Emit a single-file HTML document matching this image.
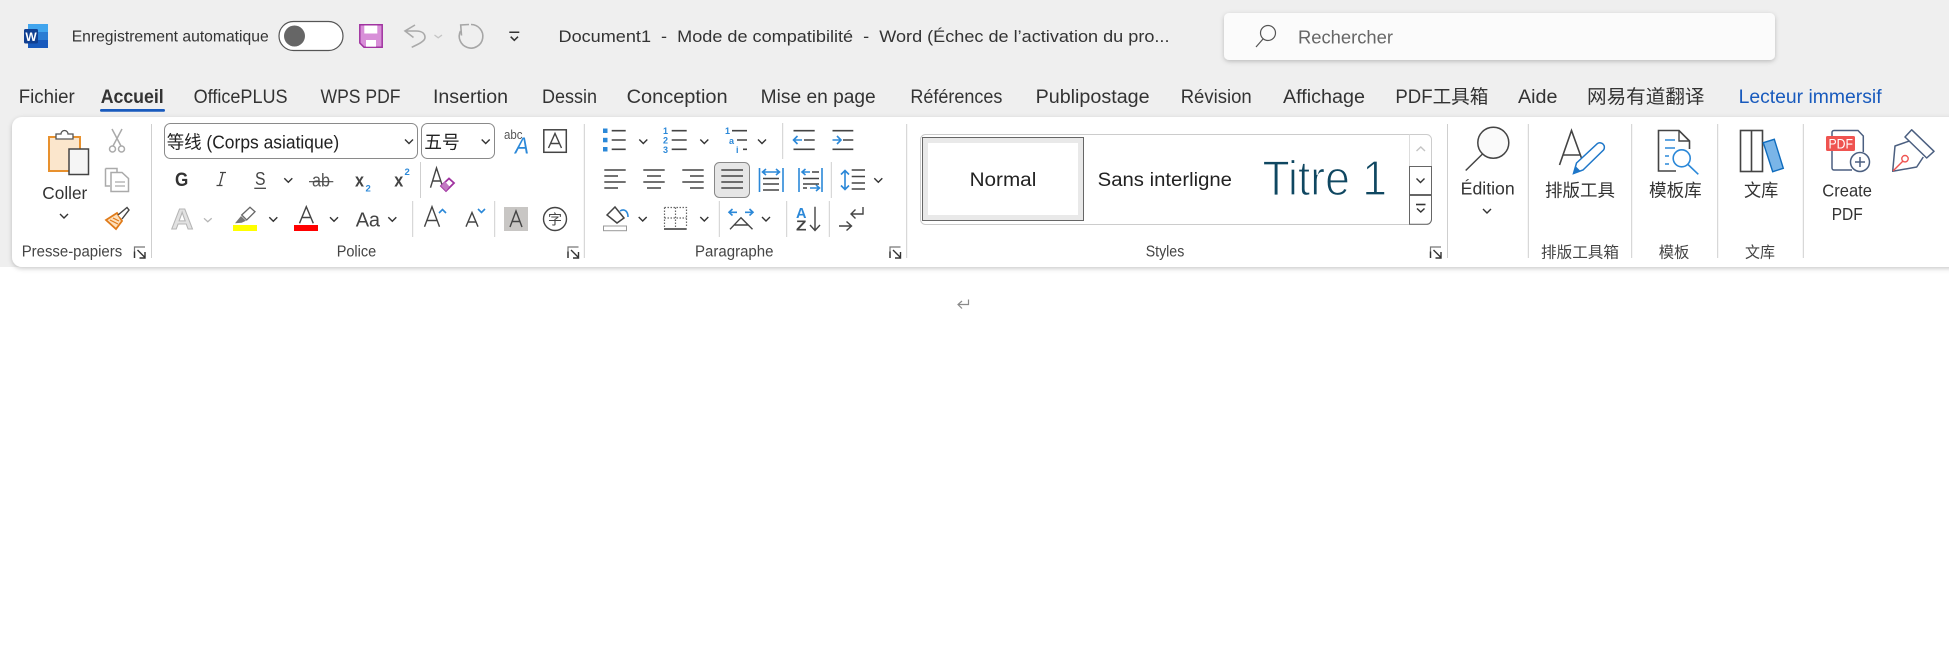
<!DOCTYPE html>
<html lang="fr"><head><meta charset="utf-8"><title>Document1 - Word</title>
<style>
html,body{margin:0;padding:0;background:#fff;width:1949px;height:649px;overflow:hidden}
svg{display:block}
text{font-family:"Liberation Sans","Noto Sans CJK SC",sans-serif;white-space:pre}
.tab{font-size:19px;fill:#333}
.lab{font-size:15.500px;fill:#444}
.big{font-size:17.500px;fill:#333}
.ln{stroke:#444;stroke-width:1.6;fill:none}
.bl{stroke:#2b88d8;stroke-width:1.6;fill:none}
.sep{stroke:#cfcfcf;stroke-width:1}
.ch{stroke:#333;stroke-width:1.4;fill:none}
.lA{fill:none;stroke:#444;stroke-width:1.4}
.num{font-size:9px;font-weight:bold;fill:#2b88d8}
</style></head><body>
<svg width="1949" height="649" viewBox="0 0 1949 649" xmlns="http://www.w3.org/2000/svg">
<defs>
<path id="c" d="M-4-2 0 2 4-2" class="ch"/>
<g id="l"><path d="M.5 11.5V.5H11" stroke="#777" stroke-width="1.2" fill="none"/><path d="M.5 11.5V5M3.5 3.5 11 11M11 5.5V11.5H5.5" stroke="#333" stroke-width="1.4" fill="none"/></g>
<filter id="sh" x="-2%" y="-10%" width="104%" height="125%"><feDropShadow dx="0" dy="1.5" stdDeviation="2.5" flood-color="#000" flood-opacity=".22"/></filter>
</defs>
<rect width="1949" height="267" fill="#efefef"/>
<rect x="0" y="267" width="1949" height="382" fill="#fff"/>

<!-- title bar -->
<rect x="28" y="24" width="20" height="24" rx="1.5" fill="#2b7cd3"/>
<rect x="28" y="24" width="20" height="8" fill="#41a5ee"/>
<rect x="28" y="40" width="20" height="8" fill="#185abd"/>
<rect x="24" y="29" width="14" height="14.500" rx="1.5" fill="#103f91"/>
<text x="31" y="41" text-anchor="middle" font-size="12" font-weight="bold" fill="#fff">W</text>
<text x="71.700" y="41.700" font-size="16" fill="#333" textLength="197" lengthAdjust="spacingAndGlyphs">Enregistrement automatique</text>
<rect x="279" y="21.500" width="64" height="29" rx="14.500" fill="#fff" stroke="#555" stroke-width="1.2"/>
<circle cx="294.500" cy="36" r="10.500" fill="#666"/>
<path d="M359.800 24.800H382.200V47.200H364L359.800 43Z" fill="#d88fd8" stroke="#a033a0" stroke-width="1.5"/>
<rect x="364.300" y="25.500" width="13" height="8" fill="#fff"/><rect x="366" y="40" width="10" height="6.700" fill="#fff"/>
<path d="M415 25 405 31 413.500 37.500M405 31H416C422 31 425 33.500 425 37.500 425 41 419 44 411.700 47.300" fill="none" stroke="#a9a9a9" stroke-width="1.6"/>
<path d="M434.500 35 438.200 37.800 442 35" fill="none" stroke="#c4c4c4" stroke-width="1.3"/>
<path d="M469 24.500 460.700 25 461.500 35.500M471 24.500A11.800 11.800 0 1 1 460.500 31" fill="none" stroke="#a6a6a6" stroke-width="1.6"/>
<path d="M509.300 32.300H519.300M510.700 36.700 514.300 40.300 518 36.700" fill="none" stroke="#333" stroke-width="1.5"/>
<text x="558.500" y="42" font-size="17" fill="#333" textLength="611" lengthAdjust="spacingAndGlyphs">Document1  -  Mode de compatibilité  -  Word (Échec de l’activation du pro...</text>
<rect x="1224" y="13" width="551" height="47" rx="5" fill="#fbfbfb" filter="url(#sh)"/>
<circle cx="1268" cy="33" r="7.500" fill="none" stroke="#555" stroke-width="1.2"/>
<path d="M1263 39 1256 47" stroke="#555" stroke-width="1.2"/>
<text x="1298" y="43.500" font-size="18" fill="#666" textLength="95" lengthAdjust="spacingAndGlyphs">Rechercher</text>

<!-- tabs -->
<text class="tab" x="18.700" y="103" textLength="56" lengthAdjust="spacingAndGlyphs">Fichier</text>
<text class="tab" x="100.700" y="103" font-weight="bold" textLength="63" lengthAdjust="spacingAndGlyphs">Accueil</text>
<rect x="100" y="109" width="65" height="2.800" rx="1.400" fill="#185abd"/>
<text class="tab" x="193.600" y="103" textLength="94" lengthAdjust="spacingAndGlyphs">OfficePLUS</text>
<text class="tab" x="320.500" y="103" textLength="80" lengthAdjust="spacingAndGlyphs">WPS PDF</text>
<text class="tab" x="433" y="103" textLength="75" lengthAdjust="spacingAndGlyphs">Insertion</text>
<text class="tab" x="542" y="103" textLength="55" lengthAdjust="spacingAndGlyphs">Dessin</text>
<text class="tab" x="626.600" y="103" textLength="101" lengthAdjust="spacingAndGlyphs">Conception</text>
<text class="tab" x="760.700" y="103" textLength="115" lengthAdjust="spacingAndGlyphs">Mise en page</text>
<text class="tab" x="910.400" y="103" textLength="92" lengthAdjust="spacingAndGlyphs">Références</text>
<text class="tab" x="1035.600" y="103" textLength="114" lengthAdjust="spacingAndGlyphs">Publipostage</text>
<text class="tab" x="1180.700" y="103" textLength="71" lengthAdjust="spacingAndGlyphs">Révision</text>
<text class="tab" x="1283" y="103" textLength="82" lengthAdjust="spacingAndGlyphs">Affichage</text>
<text class="tab" x="1395.400" y="103" textLength="93" lengthAdjust="spacingAndGlyphs">PDF工具箱</text>
<text class="tab" x="1518" y="103" textLength="39.500" lengthAdjust="spacingAndGlyphs">Aide</text>
<text class="tab" x="1587" y="103" textLength="117.500" lengthAdjust="spacingAndGlyphs">网易有道翻译</text>
<text class="tab" x="1738.600" y="103" style="fill:#185abd" textLength="143" lengthAdjust="spacingAndGlyphs">Lecteur immersif</text>

<!-- ribbon -->
<path d="M22 117H1960V267H22A10 10 0 0 1 12 257V127A10 10 0 0 1 22 117Z" fill="#fff" filter="url(#sh)"/>

<!-- clipboard -->
<rect x="49" y="137" width="31" height="34" fill="#fbe6cc" stroke="#e8912e" stroke-width="2"/>
<path d="M56 139V134H61A3.500 3.500 0 0 1 68 134H73V139Z" fill="#fff" stroke="#555" stroke-width="1.300"/>
<rect x="69" y="149" width="19.500" height="25.500" fill="#f5f5f5" stroke="#444" stroke-width="1.500"/>
<text class="big" x="42.300" y="199" textLength="45" lengthAdjust="spacingAndGlyphs">Coller</text>
<use href="#c" x="64" y="216"/>
<g fill="none" stroke="#aaa" stroke-width="1.500"><path d="M112 129 121 146M122 129 113 146"/><circle cx="112.500" cy="149" r="3"/><circle cx="121.500" cy="149" r="3"/></g>
<path d="M105.500 168.500H117V172M105.500 168.500V186H110" fill="none" stroke="#aaa" stroke-width="1.500"/>
<path d="M111 172.500H122L128.500 178.500V191.500H111Z" fill="#fff" stroke="#aaa" stroke-width="1.500"/><path d="M115 182H125M115 186H125" stroke="#aaa" stroke-width="1.200"/>
<path d="M106 220 117 213 122 221 116 229Z" fill="#fce0bd" stroke="#e07b1a" stroke-width="1.800"/>
<path d="M118 215 127 207.500 129 210 122 219" fill="#fff" stroke="#444" stroke-width="1.400"/>
<path d="M110 220 118 224M113 218 119 221" stroke="#e07b1a" stroke-width="1.200"/>
<text class="lab" x="21.700" y="256.700" textLength="100.500" lengthAdjust="spacingAndGlyphs">Presse-papiers</text>
<use href="#l" x="134" y="246.500"/>
<path class="sep" d="M151.500 124V258"/>

<!-- police -->
<rect x="164.500" y="123.500" width="253" height="35" rx="6" fill="#fff" stroke="#8a8a8a" stroke-width="1"/>
<text x="166.700" y="148.300" font-size="18" fill="#222" textLength="172.500" lengthAdjust="spacingAndGlyphs">等线 (Corps asiatique)</text>
<use href="#c" x="409" y="141.500"/>
<rect x="421.500" y="123.500" width="73" height="35" rx="6" fill="#fff" stroke="#8a8a8a" stroke-width="1"/>
<text x="424.300" y="148.300" font-size="18" fill="#222" textLength="35.500" lengthAdjust="spacingAndGlyphs">五号</text>
<use href="#c" x="485.700" y="141.500"/>
<text x="504" y="139" font-size="13" fill="#555" textLength="18.500" lengthAdjust="spacingAndGlyphs">abc</text>
<text x="515" y="153.300" font-size="23" font-style="italic" fill="#2b88d8" textLength="14" lengthAdjust="spacingAndGlyphs">A</text>
<rect x="543.800" y="129.800" width="22.500" height="22.500" fill="#fff" stroke="#444" stroke-width="1.500"/>
<path class="lA" d="M548.500 148 555 133.500 561.500 148M550.500 143.500H559.500"/>

<text x="175" y="186" font-size="19" font-weight="bold" fill="#333" textLength="13.300" lengthAdjust="spacingAndGlyphs">G</text>
<path d="M220 172.500H226M216.500 185.500H222.500M223 172.500 219.500 185.500" fill="none" stroke="#444" stroke-width="1.300"/>
<text x="255" y="185" font-size="18.500" fill="#444" textLength="10.500" lengthAdjust="spacingAndGlyphs">S</text>
<path d="M254.300 188.300H266" stroke="#444" stroke-width="1.300"/>
<use href="#c" x="288.300" y="180.300"/>
<text x="312" y="186.700" font-size="18" fill="#555" textLength="18" lengthAdjust="spacingAndGlyphs">ab</text>
<path d="M309 181.700H333.300" stroke="#444" stroke-width="1.200"/>
<text x="355" y="186.700" font-size="18" font-weight="bold" fill="#444" textLength="9" lengthAdjust="spacingAndGlyphs">x</text>
<text x="365.500" y="191.700" font-size="9.500" font-weight="bold" fill="#2b88d8">2</text>
<text x="394.300" y="186.700" font-size="18" font-weight="bold" fill="#444" textLength="9" lengthAdjust="spacingAndGlyphs">x</text>
<text x="404.500" y="175" font-size="9.500" font-weight="bold" fill="#2b88d8">2</text>
<path class="sep" d="M420.500 162V198"/>
<path class="lA" d="M430.500 187.700 436.500 168 443 187.700M432.500 181H441"/>
<path d="M441 186 449 178.500 454 183 446 191Z" fill="#fff" stroke="#a033a0" stroke-width="1.800"/>
<path d="M441 186 445 181.500 449.500 186.500 446 191Z" fill="#c27ac2"/>

<text x="171" y="229" font-size="29" font-weight="bold" fill="#e2e2e2" stroke="#b5b5b5" stroke-width="1" textLength="22.300" lengthAdjust="spacingAndGlyphs">A</text>
<path d="M204 218.300 207.800 221.700 211.700 218.300" fill="none" stroke="#b5b5b5" stroke-width="1.300"/>
<path d="M235 223.300 241 216 246 220.700 241.700 222.700Z" fill="#777"/>
<path d="M241.700 215 250 207.300 255 211.700 246.700 220Z" fill="#fff" stroke="#666" stroke-width="1.300"/>
<rect x="233" y="225" width="24" height="6" fill="#ffff00"/>
<use href="#c" x="273.300" y="219.300"/>
<path class="lA" d="M299.500 223.300 306.300 206.700 313.300 223.300M301.800 217.500H311"/>
<rect x="294" y="225" width="24" height="6" fill="#f00"/>
<use href="#c" x="334" y="219.300"/>
<text x="355.700" y="226.700" font-size="20" fill="#444" textLength="24.300" lengthAdjust="spacing">Aa</text>
<use href="#c" x="392.300" y="219.300"/>
<path class="sep" d="M412.700 201V237"/>
<path class="lA" d="M424.500 226.700 432 206.700 439.500 226.700M427 220.500H437"/>
<path d="M439 213 442.500 209.500 446 213" class="bl"/>
<path class="lA" d="M466 226.700 472 212.500 478 226.700M468 222H476"/>
<path d="M478 209 481.500 212.500 485 209" class="bl"/>
<path class="sep" d="M494.700 201V237"/>
<rect x="504" y="207" width="24" height="24" fill="#c8c6c4"/>
<path class="lA" d="M510 227 516 211 522 227M512 221.500H520"/>
<circle cx="555" cy="219" r="11.500" fill="none" stroke="#444" stroke-width="1.400"/>
<text x="555" y="224.500" text-anchor="middle" font-size="14" fill="#444">字</text>
<text class="lab" x="336.700" y="256.700" textLength="39.500" lengthAdjust="spacingAndGlyphs">Police</text>
<use href="#l" x="567.500" y="246.500"/>
<path class="sep" d="M584.300 124V258"/>

<!-- paragraph -->
<g fill="#2b88d8"><rect x="603" y="128.500" width="4.500" height="4.500"/><rect x="603" y="137.800" width="4.500" height="4.500"/><rect x="603" y="147" width="4.500" height="4.500"/></g>
<path class="ln" d="M611.700 130.700H625.700M611.700 140H625.700M611.700 149.300H625.700"/>
<use href="#c" x="643.300" y="141.500"/>
<text class="num" x="663" y="134">1</text><text class="num" x="663" y="143.500">2</text><text class="num" x="663" y="153">3</text>
<path class="ln" d="M671.700 130.700H686.700M671.700 140H686.700M671.700 149.300H686.700"/>
<use href="#c" x="704.300" y="141.500"/>
<text class="num" x="725" y="134">1</text><text class="num" x="729" y="144">a</text><text class="num" x="736" y="153">i</text>
<path class="ln" d="M732 130.700H747M737 140H747M743 149.300H747"/>
<use href="#c" x="762" y="141.500"/>
<path class="sep" d="M782.700 123V159"/>
<path class="ln" d="M793.500 130.700H814.700M804 140H814.700M793.500 149.300H814.700"/>
<path class="bl" d="M793.500 140H802M797.500 136 793.500 140 797.500 144"/>
<path class="ln" d="M832.500 130.700H853.300M843 140H853.300M832.500 149.300H853.300"/>
<path class="bl" d="M832.500 140H841M837 136 841 140 837 144"/>

<path class="ln" d="M604.300 170H625.700M604.300 176H618M604.300 182H625.700M604.300 188H618"/>
<path class="ln" d="M643.300 170H664.700M647 176H661M643.300 182H664.700M647 188H661"/>
<path class="ln" d="M682.300 170H703.700M690 176H703.700M682.300 182H703.700M690 188H703.700"/>
<rect x="714.500" y="162.500" width="35" height="35" rx="5" fill="#e6e6e6" stroke="#888"/>
<path d="M721.300 170H743M721.300 176H743M721.300 182H743M721.300 188H743" stroke="#444" stroke-width="1.600" fill="none"/>
<path class="bl" d="M759.500 168V192M783 168V192M763 172H779M766 169 762.500 172 766 175M776 169 779.500 172 776 175"/>
<path class="ln" d="M763 178.500H779M763 184H779M763 190H779"/>
<path class="bl" d="M799 168V192M822 168V192M802 172H810M805.500 169 802 172 805.500 175M810 188H819M816 185 819.500 188 816 191"/>
<path class="ln" d="M812 172H819M803 178.500H819M803 184H819M803 188H807"/>
<path class="sep" d="M831.300 162V198"/>
<path class="bl" d="M845 171V189M841 174.500 845 170.500 849 174.500M841 185.500 845 189.500 849 185.500"/>
<path class="ln" d="M851.700 170H865M851.700 176.500H865M851.700 183H865M851.700 189H865"/>
<use href="#c" x="878.300" y="180.300"/>

<rect x="603.500" y="226" width="23" height="4.700" fill="#fff" stroke="#999"/>
<path d="M607 215 615 207 624 218 617 223Z" fill="#fff" stroke="#444" stroke-width="1.500"/>
<path d="M620 211C625 208 628 212 628 217" class="bl" stroke-width="2"/>
<use href="#c" x="642.700" y="219"/>
<path d="M664.500 207.500H686.500V227M664.500 207.500V227M664.500 218H686.500M675.500 207.500V227" fill="none" stroke="#666" stroke-width="1.200" stroke-dasharray="1.500 1.500"/>
<path d="M664 229H686.700" stroke="#333" stroke-width="1.600"/>
<use href="#c" x="704.300" y="219"/>
<path class="sep" d="M719.300 201V237"/>
<path class="bl" d="M729 212.300H737M732.500 209 729 212.300 732.500 215.500M745 212.300H753M749.500 209 753 212.300 749.500 215.500"/>
<path class="lA" d="M730 229.300 741 217.700 752.500 229.300M734.500 225H748"/>
<use href="#c" x="766" y="219"/>
<path class="sep" d="M786.700 201V237"/>
<text x="796" y="218" font-size="15" font-weight="bold" fill="#2b88d8" textLength="10.500" lengthAdjust="spacingAndGlyphs">A</text>
<text x="796" y="230.500" font-size="15" font-weight="bold" fill="#444" textLength="10.500" lengthAdjust="spacingAndGlyphs">Z</text>
<path class="lA" d="M815 206.700V230M810 225 815 230.500 820 225"/>
<path class="sep" d="M829.300 201V237"/>
<path class="lA" d="M839 226H851M846.500 221.500 851.500 226 846.500 230.500M863 207V214H851M855.500 209.500 851 214 855.500 218.500"/>
<text class="lab" x="695" y="256.700" textLength="78.500" lengthAdjust="spacingAndGlyphs">Paragraphe</text>
<use href="#l" x="889.500" y="246.500"/>
<path class="sep" d="M906.700 124V258"/>

<!-- styles -->
<rect x="920.500" y="134.500" width="511" height="90" rx="5" fill="#fff" stroke="#ccc"/>
<rect x="922.500" y="137.500" width="161" height="83" fill="#fff" stroke="#666"/>
<rect x="925.500" y="140.500" width="155" height="77" fill="#fff" stroke="#e9e9e9" stroke-width="5"/>
<text x="969.600" y="186" font-size="19" fill="#222" textLength="66.700" lengthAdjust="spacingAndGlyphs">Normal</text>
<text x="1097.700" y="186" font-size="19" fill="#222" textLength="134.300" lengthAdjust="spacingAndGlyphs">Sans interligne</text>
<text x="1262.500" y="195" font-size="49" fill="#0f4761" stroke="#fff" stroke-width="1.300" textLength="124.500" lengthAdjust="spacingAndGlyphs">Titre 1</text>
<path d="M1409.500 134.500V166" stroke="#ddd"/>
<path d="M1416.500 151 1420.800 147 1425 151" fill="none" stroke="#c4c4c4" stroke-width="1.400"/>
<rect x="1409.500" y="166.500" width="22" height="28" fill="#fff" stroke="#666"/>
<use href="#c" x="1420.500" y="180.500"/>
<path d="M1409.500 195.500V224.300H1426.500A5 5 0 0 0 1431.500 219.300V195.500Z" fill="#fff" stroke="#666"/>
<path d="M1416 204.500H1425.500" stroke="#333" stroke-width="1.600"/>
<path d="M1417 208.500 1420.800 212 1424.500 208.500" class="ch"/>
<text class="lab" x="1145.700" y="256.700" textLength="38.600" lengthAdjust="spacingAndGlyphs">Styles</text>
<use href="#l" x="1430" y="246.500"/>
<path class="sep" d="M1447.500 124V258"/>

<!-- edition -->
<circle cx="1493.300" cy="142.700" r="15.500" fill="#fafafa" stroke="#444" stroke-width="1.500"/>
<path d="M1482.500 154 1465.700 170.500" stroke="#444" stroke-width="1.500"/>
<text class="big" x="1460.700" y="194.300" textLength="54" lengthAdjust="spacingAndGlyphs">Édition</text>
<use href="#c" x="1487" y="211"/>
<path class="sep" d="M1528.300 124V258"/>

<!-- layout tool -->
<path d="M1559.500 165 1571.500 130.500 1584 165M1563 155H1580" fill="none" stroke="#444" stroke-width="1.600"/>
<path d="M1573.500 173.500 1576.500 163 1597.500 143.500A4.500 4.500 0 0 1 1603.500 150L1583 170Z" fill="#fff" stroke="#1e77c9" stroke-width="1.500"/>
<path d="M1573.500 173.500 1575.500 166 1580.500 171Z" fill="#1e77c9"/>
<text class="big" x="1545" y="196.700" textLength="70" lengthAdjust="spacingAndGlyphs">排版工具</text>
<text class="lab" x="1541" y="257.500" textLength="78" lengthAdjust="spacingAndGlyphs">排版工具箱</text>
<path class="sep" d="M1631.700 124V258"/>

<!-- template -->
<path d="M1676 171H1658.500V130.500H1679L1689.500 141V149" fill="#fff" stroke="#444" stroke-width="1.600"/>
<path d="M1679 130.500V141H1689.500" fill="none" stroke="#444" stroke-width="1.400"/>
<path class="bl" d="M1665 140H1675M1665 148H1675M1665 156H1669M1665 164H1669"/>
<circle cx="1681.700" cy="158.300" r="8.500" fill="#fff" stroke="#2b88d8" stroke-width="1.600"/>
<path d="M1688 164.500 1698.300 174.300" class="bl"/>
<text class="big" x="1649" y="196.700" textLength="52.700" lengthAdjust="spacingAndGlyphs">模板库</text>
<text class="lab" x="1658.700" y="257.500" textLength="30.600" lengthAdjust="spacingAndGlyphs">模板</text>
<path class="sep" d="M1717.700 124V258"/>

<!-- library -->
<rect x="1740.500" y="130.500" width="22" height="41" fill="#fff" stroke="#444" stroke-width="1.600"/>
<path d="M1751.500 130.500V171.500" stroke="#444" stroke-width="1.600"/>
<path d="M1763.300 142.700 1774.300 139.300 1783.300 168.300 1772.700 171.700Z" fill="#7ab5e8" stroke="#0f6cbd" stroke-width="1.400"/>
<text class="big" x="1744" y="196.700" textLength="34.300" lengthAdjust="spacingAndGlyphs">文库</text>
<text class="lab" x="1745" y="257.500" textLength="30" lengthAdjust="spacingAndGlyphs">文库</text>
<path class="sep" d="M1803.300 124V258"/>

<!-- create pdf -->
<path d="M1852 170H1834A2 2 0 0 1 1832 168V132.500A2 2 0 0 1 1834 130.500H1858L1863.300 136V152" fill="#fff" stroke="#4b5f80" stroke-width="1.500"/>
<rect x="1826" y="136" width="29" height="15" rx="1.500" fill="#ef5350"/>
<text x="1828.500" y="148.300" font-size="14" fill="#fff" textLength="24.500" lengthAdjust="spacingAndGlyphs">PDF</text>
<circle cx="1860" cy="162" r="9.500" fill="#fff" stroke="#4b5f80" stroke-width="1.500"/>
<path d="M1855 162H1865M1860 157V167" stroke="#4b5f80" stroke-width="1.500"/>
<text class="big" x="1822.300" y="196.700" textLength="49.700" lengthAdjust="spacingAndGlyphs">Create</text>
<text class="big" x="1831.700" y="220" textLength="31" lengthAdjust="spacingAndGlyphs">PDF</text>

<!-- nib -->
<path d="M1909.300 141 1895 146 1892.700 171.300 1916.700 167 1923.300 157" fill="#fff" stroke="#4b5f80" stroke-width="1.500" stroke-linejoin="round"/>
<path d="M1905 137 1911.700 129.800 1934 151.300 1926.700 158Z" fill="#fff" stroke="#4b5f80" stroke-width="1.500" stroke-linejoin="round"/>
<path d="M1893 171 1903 161" stroke="#ef5350" stroke-width="1.400"/>
<circle cx="1905" cy="158.700" r="3.200" fill="#fff" stroke="#ef5350" stroke-width="1.400"/>

<!-- paragraph mark -->
<path d="M968.500 299.500V304.500H958.500M962 301 958 304.500 962 308.500" fill="none" stroke="#8a8a8a" stroke-width="1.200"/>
</svg>
</body></html>
